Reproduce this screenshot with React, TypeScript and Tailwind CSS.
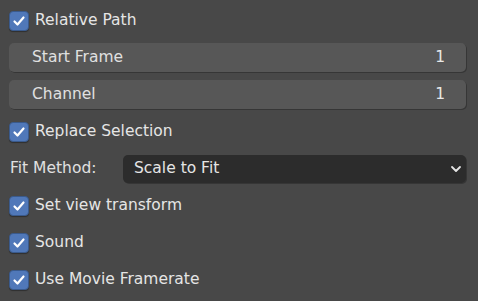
import React from 'react'

function Check({ label }: { label: string }) {
  return (
    <div className="flex h-[37px] items-center pl-[9px]">
      <div className="flex h-[20px] w-[20px] items-center justify-center rounded-[4px] border border-[#3a5a8c] bg-[#5078b9] shadow-[0_1px_1px_rgba(0,0,0,0.35)]">
        <svg width="14" height="14" viewBox="0 0 14 14" fill="none">
          <path d="M2.5 7.5 L5.5 10.5 L11.5 3.5" stroke="#fff" strokeWidth="2.2" strokeLinecap="round" strokeLinejoin="round" />
        </svg>
      </div>
      <span className="ml-[6px] pt-[1px] text-[#e5e5e5]">{label}</span>
    </div>
  )
}

function NumField({ label, value }: { label: string; value: string }) {
  return (
    <div className="flex h-[37px] items-center pl-[9px] pr-[12px]">
      <div className="flex h-[29px] flex-1 items-center justify-between rounded-[5px] bg-[#575757] pl-[23px] pr-[21px] shadow-[1px_1px_0_rgba(0,0,0,0.25)]">
        <span className="pt-[1px] text-[#e0e0e0]">{label}</span>
        <span className="pt-[1px] text-[#e8e8e8]">{value}</span>
      </div>
    </div>
  )
}

export default function App() {
  return (
    <div
      className="h-[301px] w-[478px] overflow-hidden bg-[#484848] pt-[2px] text-[15.5px] leading-none"
      style={{ fontFamily: '"DejaVu Sans", sans-serif' }}
    >
      <Check label="Relative Path" />
      <NumField label="Start Frame" value="1" />
      <NumField label="Channel" value="1" />
      <Check label="Replace Selection" />
      <div className="flex h-[37px] items-center pl-[10px] pr-[12px]">
        <span className="w-[113px] pt-[1px] text-[#e0e0e0]">Fit Method:</span>
        <div className="flex h-[28px] flex-1 items-center justify-between rounded-[5px] bg-[#2c2c2c] pl-[11px] pr-[3px] shadow-[1px_1px_0_rgba(0,0,0,0.25)]">
          <span className="pt-[1px] text-[#e5e5e5]">Scale to Fit</span>
          <svg width="14" height="14" viewBox="0 0 14 14" fill="none">
            <path d="M3 5 L7 9 L11 5" stroke="#e5e5e5" strokeWidth="1.8" strokeLinecap="round" strokeLinejoin="round" />
          </svg>
        </div>
      </div>
      <Check label="Set view transform" />
      <Check label="Sound" />
      <Check label="Use Movie Framerate" />
    </div>
  )
}
